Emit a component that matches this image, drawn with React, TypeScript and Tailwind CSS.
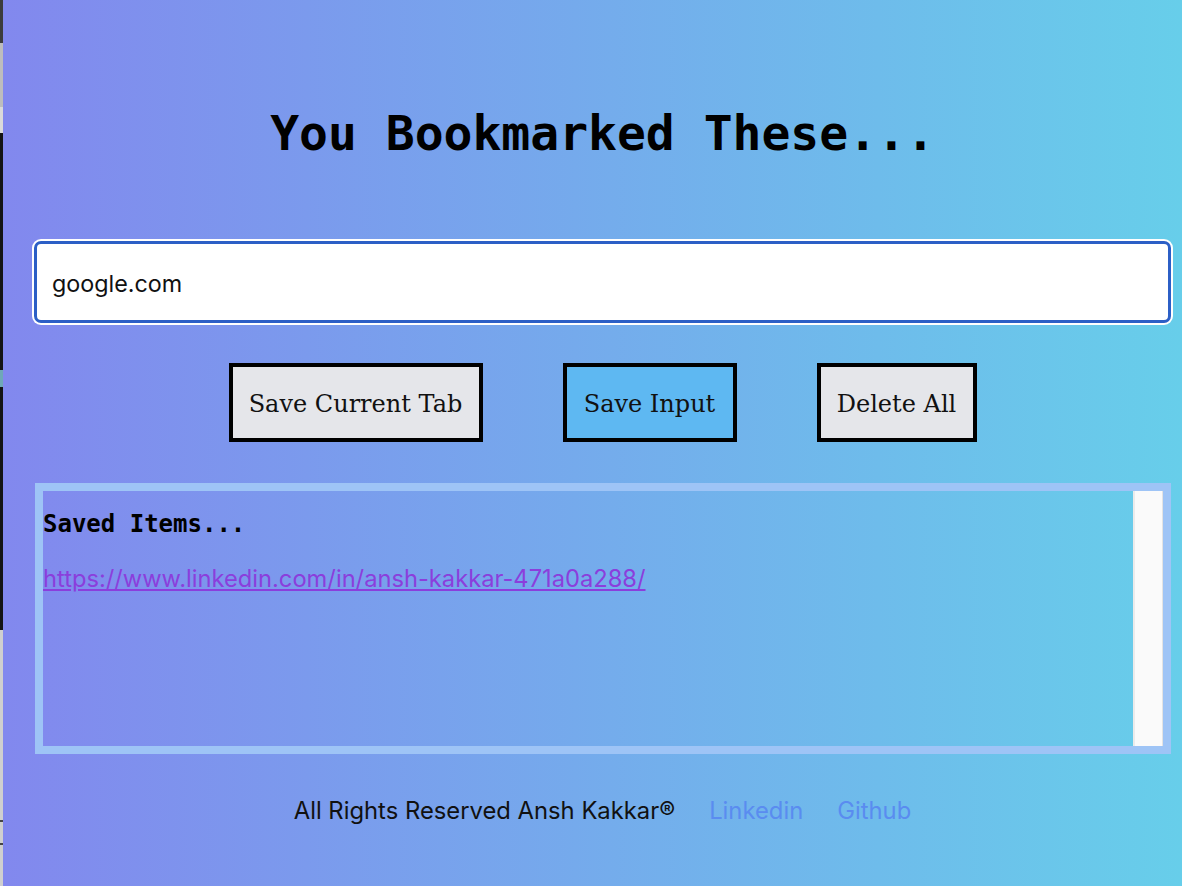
import React from "react";

export default function App() {
  return (
    <div className="flex h-[886px] w-full overflow-hidden">
      <div className="flex w-[3px] shrink-0 flex-col">
        <div className="h-[43px] bg-[#3c3c3c]" />
        <div className="h-[64px] bg-[#bdbdbd]" />
        <div className="h-[26px] bg-[#dadada]" />
        <div className="h-[237px] bg-[#141414]" />
        <div className="h-[17px] bg-[#6fa8b8]" />
        <div className="h-[243px] bg-[#141414]" />
        <div className="h-[190px] bg-[#cfcfcf]" />
        <div className="h-[2px] bg-[#444]" />
        <div className="h-[21px] bg-[#cfcfcf]" />
        <div className="h-[2px] bg-[#444]" />
        <div className="flex-1 bg-[#cfcfcf]" />
      </div>
      <div className="flex flex-1 flex-col bg-[linear-gradient(to_right,#8288ee,#67ceea)] pl-[31px] pr-[11px]">
        <h1 className="mt-[105px] text-center font-['DejaVu_Sans_Mono',monospace] text-[48px] font-bold leading-[56px] text-black">
          You Bookmarked These...
        </h1>
        <input
          className="mt-[80px] h-[82px] w-full rounded-[7px] border-[3px] border-[#2c5fc6] bg-white pl-[15px] pt-[2px] font-['Inter',sans-serif] text-[23.3px] text-[#111] shadow-[0_0_0_2px_#ffffff] outline-none"
          defaultValue="google.com"
        />
        <div className="mt-[40px] flex justify-center gap-[80px] font-['DejaVu_Serif',serif] text-[24px] text-[#111]">
          <button className="h-[79px] w-[254px] border-4 border-black bg-[#e5e6ea] pt-[3px] leading-[28px]">
            Save Current Tab
          </button>
          <button className="h-[79px] w-[174px] border-4 border-black bg-[#5eb8f2] pt-[3px] leading-[28px]">
            Save Input
          </button>
          <button className="h-[79px] w-[160px] border-4 border-black bg-[#e5e6ea] pt-[3px] leading-[28px]">
            Delete All
          </button>
        </div>
        <div className="ml-[1px] mt-[41px] flex h-[271px] border-8 border-[#9ec4f6]">
          <div className="flex-1 pt-[19px]">
            <h3 className="font-['DejaVu_Sans_Mono',monospace] text-[24px] font-bold leading-[28px] text-black">
              Saved Items...
            </h3>
            <a
              href="#"
              className="mt-[26px] block font-['Inter',sans-serif] text-[23.7px] leading-[29px] text-[#8b3edc] underline"
            >
              https://www.linkedin.com/in/ansh-kakkar-471a0a288/
            </a>
          </div>
          <div className="w-[30px] border-l-2 border-r border-l-[#ebebeb] border-r-[#e3e3e3] bg-[#fafafa]" />
        </div>
        <footer className="mt-[43px] flex justify-center gap-[34px] font-['Inter',sans-serif] text-[23.8px] leading-[28px]">
          <span className="text-[#111]">All Rights Reserved Ansh Kakkar®</span>
          <a href="#" className="text-[#5a8cf0]">
            Linkedin
          </a>
          <a href="#" className="text-[#5a8cf0]">
            Github
          </a>
        </footer>
      </div>
    </div>
  );
}
